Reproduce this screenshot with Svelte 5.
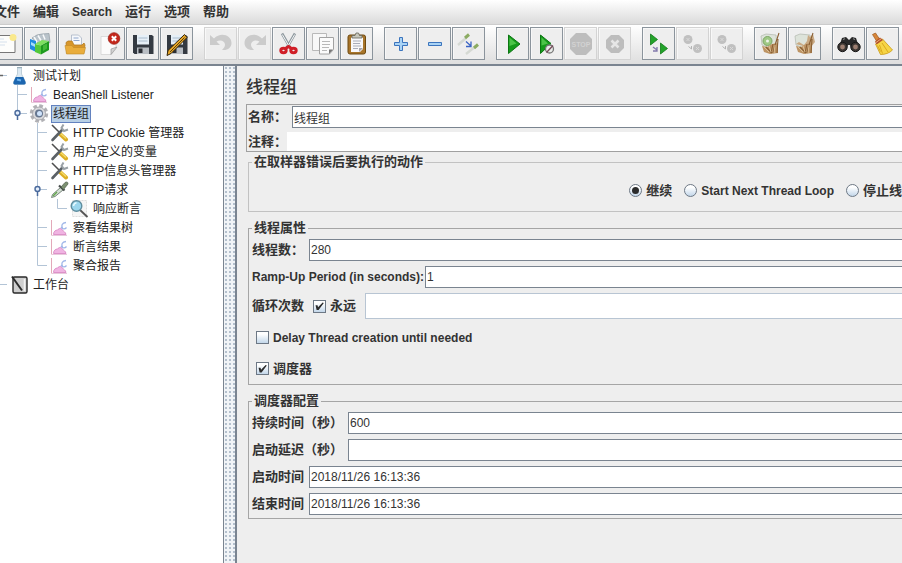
<script>
  const menus = [
    { text: '文件' },
    { text: '编辑' },
    { text: 'Search', latin: true },
    { text: '运行' },
    { text: '选项' },
    { text: '帮助' }
  ];

  const toolGroups = [
    ['new', 'templates', 'open', 'close', 'save', 'saveas'],
    ['undo', 'redo', 'cut', 'copy', 'paste'],
    ['expand', 'collapse', 'toggle'],
    ['start', 'startnow', 'stop', 'shutdown'],
    ['remotestart', 'remotestop', 'remoteshutdown'],
    ['clear', 'clearall'],
    ['find', 'resetfind']
  ];
  const disabled = ['undo', 'redo', 'stop', 'shutdown', 'remotestop', 'remoteshutdown'];

  // Guide cells: t = tee, l = elbow, v = vertical, h = short stub, r = root handle, o = handle on tee, e = handle on elbow
  const tree = [
    { guides: 'r', icon: 'flask', text: '测试计划' },
    { guides: ' t', icon: 'chart', text: 'BeanShell Listener' },
    { guides: ' e', icon: 'gear', text: '线程组', selected: true },
    { guides: '  t', icon: 'tools', text: 'HTTP Cookie 管理器' },
    { guides: '  t', icon: 'tools', text: '用户定义的变量' },
    { guides: '  t', icon: 'tools', text: 'HTTP信息头管理器' },
    { guides: '  o', icon: 'dropper', text: 'HTTP请求' },
    { guides: '  vl', icon: 'lens', text: '响应断言' },
    { guides: '  t', icon: 'chart', text: '察看结果树' },
    { guides: '  t', icon: 'chart', text: '断言结果' },
    { guides: '  l', icon: 'chart', text: '聚合报告' },
    { guides: 'h', icon: 'bench', text: '工作台' }
  ];

  let name = $state('线程组');
  let comment = $state('');
  let action = $state('continue');
  let threads = $state('280');
  let ramp = $state('1');
  let forever = $state(true);
  let loops = $state('');
  let delay = $state(false);
  let scheduler = $state(true);
  let duration = $state('600');
  let startupDelay = $state('');
  let startTime = $state('2018/11/26 16:13:36');
  let endTime = $state('2018/11/26 16:13:36');
</script>

{#snippet floppy()}
  <path d="M7 8h19l1.500 1.500V27H8.500L7 25.500z" fill="#343a42" />
  <path d="M11 8h12v9.500H11z" fill="#e6eff7" />
  <path d="M12.500 11h9M12.500 14h9" stroke="#a9bccd" />
  <path d="M11 20.500h12V27H11z" fill="#b9bec4" />
  <path d="M12.500 21.500h4V26h-4z" fill="#2b2f35" />
{/snippet}

{#snippet toolIcon(kind)}
  <svg class="tool-icon" viewBox="0 0 33 33" aria-hidden="true">
    {#if kind === 'new'}
      <path d="M4 8.500h21v17H4z" fill="#fdfdfb" stroke="#777" />
      <path d="M7 12h7M7 15h10M7 18h8" stroke="#d5e0ec" />
      <circle cx="23" cy="10.500" r="3.500" fill="#fae98c" />
    {:else if kind === 'templates'}
      <path d="M8 11l5-3 5-1 7-.5 1 9-9 3z" fill="#b9c3ca" stroke="#8e9aa2" stroke-width=".7" />
      <path d="M10 10l3 5M14 8.500l3 5M19 7.500l2 5" stroke="#f7f9fa" stroke-width="1.500" />
      <path d="M6 12l6 2v11l-6-3z" fill="#1f8be0" />
      <path d="M7 15l4 2v3l-4-2z" fill="#a5dcfa" />
      <path d="M11 17l6 1.500v9L11 25z" fill="#52c83c" />
      <path d="M17 18.500l8-4.500v9l-8 4.500z" fill="#1e9a1e" />
      <path d="M11 17l7-4 7 1-8 4.500z" fill="#7fe060" />
      <path d="M19 18.500l4-2v5l-4 2.500z" fill="#45b93a" />
    {:else if kind === 'open'}
      <path d="M13.500 8h7l3 3v10h-10z" fill="#f6f8fb" stroke="#a9b4c4" stroke-width=".8" />
      <path d="M15.500 11h5M15.500 13.500h6" stroke="#8ea6cc" />
      <path d="M8 15.500l2-1.500h4l2 4h8l2-2 1 2-1.500 8.500H9z" fill="#d8962a" stroke="#b27a1e" stroke-width=".8" />
      <path d="M7 18.500h7l1.500 2H27.500L26 27H8.500z" fill="#e9ad3c" stroke="#c18a26" stroke-width=".6" />
    {:else if kind === 'close'}
      <path d="M9 9.500h15V22l-5 5.500H9z" fill="#fbfbfb" stroke="#d4d4d4" stroke-width=".8" />
      <path d="M25 20l-6 7.500V22z" fill="#d4d4d4" stroke="#8d8d8d" stroke-width=".6" />
      <circle cx="22" cy="11.500" r="5.800" fill="#c4281c" stroke="#98190f" stroke-width=".7" />
      <path d="M19.800 9.300l4.400 4.400M24.200 9.300l-4.400 4.400" stroke="#fff" stroke-width="2" />
    {:else if kind === 'save'}
      {@render floppy()}
    {:else if kind === 'saveas'}
      {@render floppy()}
      <path d="M24.500 7.500l2.500 3L11 26.500l-4 2 1-5z" fill="#e8a727" stroke="#33240a" stroke-width="1" />
      <path d="M24.500 10.500L10 25" stroke="#57400f" stroke-width="1" />
    {:else if kind === 'undo'}
      <path d="M6 8v10h10l-3.500-3.500c4-2.500 8.500-.5 8.500 3 0 2-1 3.500-3 5.500 6 .5 9.500-2.500 9.500-7 0-8-11-11.500-17.500-4.500z" fill="#cbcbcb" />
    {:else if kind === 'redo'}
      <path d="M28 8v10H18l3.500-3.500c-4-2.500-8.500-.5-8.500 3 0 2 1 3.500 3 5.500-6 .5-9.500-2.500-9.500-7 0-8 11-11.500 17.500-4.500z" fill="#cbcbcb" />
    {:else if kind === 'cut'}
      <path d="M10 6.500l8 14M23 6.500l-8 14" stroke="#8d979d" stroke-width="2.600" />
      <path d="M10.300 7.500l7.500 13M22.700 7.500l-7.500 13" stroke="#f4f6f7" stroke-width="1" />
      <g fill="none" stroke="#d01f28" stroke-width="3">
        <ellipse cx="11.500" cy="23.500" rx="2.700" ry="2.200" />
        <ellipse cx="21.500" cy="23.500" rx="2.700" ry="2.200" />
        <path d="M13.500 21.500l3-2 3 2" />
      </g>
    {:else if kind === 'copy'}
      <path d="M6.500 6.500h14v17h-14z" fill="#f8f8f8" stroke="#b9b9b9" />
      <path d="M13.500 10.500h14v12l-4 4.500h-10z" fill="#fbfbfb" stroke="#a2a2a2" />
      <path d="M27 22.500h-4V27z" fill="#777" />
      <path d="M16 14.500h8M16 17.500h8M16 20.500h7M16 23.500h5" stroke="#b8b8b8" />
    {:else if kind === 'paste'}
      <rect x="8" y="8" width="17.500" height="19" rx="2" fill="#a8752a" stroke="#6e4a10" />
      <path d="M11 10.500h12V22l-3 3h-9z" fill="#f8f8fa" />
      <path d="M13 14h8M13 16.500h7M13 19h8M13 21.500h5" stroke="#a9adba" />
      <path d="M23 21h-4v4z" fill="#a6a6ad" />
      <path d="M12 11V8.500h3l1-2.500h2.500l1 2.500H22V11z" fill="#c7c7bb" stroke="#66665c" stroke-width=".8" />
    {:else if kind === 'expand'}
      <path d="M15.500 10.500h3v5h5v3h-5v5h-3v-5h-5v-3h5z" fill="#a9d3f5" stroke="#3b74bd" />
    {:else if kind === 'collapse'}
      <path d="M10.500 15.500h13v3h-13z" fill="#a9d3f5" stroke="#3b74bd" />
    {:else if kind === 'toggle'}
      <path d="M6 18l8-7M14 27l10-8" stroke="#d5d9d3" stroke-width="2.400" />
      <path d="M13 11l4-3.500M22 21l4-3.500" stroke="#8bab62" stroke-width="3" />
      <path d="M14 14.500l5 4.500M19 14.500v5h-5" fill="none" stroke="#3b64c4" stroke-width="1.300" />
    {:else if kind === 'start'}
      <path d="M12.500 8L24 17 12.500 26.500z" fill="#159a1b" stroke="#0c7612" />
      <path d="M13.500 10.500l7 6-7 2.500z" fill="#4cc448" />
    {:else if kind === 'startnow'}
      <path d="M10.500 8L21 16.500l-10.500 10z" fill="#159a1b" stroke="#0c7612" />
      <path d="M11.500 10.500l6.500 6-6.500 2z" fill="#4cc448" />
      <circle cx="19.500" cy="22" r="4" fill="#e9ece9" stroke="#777" stroke-width="1.300" />
      <path d="M16.500 25.500l6.500-7" stroke="#774a5a" stroke-width="1.300" />
    {:else if kind === 'stop'}
      <path d="M12 6h10l6 6v10l-6 6H12l-6-6V12z" fill="#bdbdbd" />
      <text x="17" y="20" text-anchor="middle" class="stop-text">STOP</text>
    {:else if kind === 'shutdown'}
      <path d="M13 8h8l5 5v8l-5 5h-8l-5-5v-8z" fill="#bdbdbd" />
      <path d="M13.500 13.500l7 7M20.500 13.500l-7 7" stroke="#e6e6e6" stroke-width="2.500" />
    {:else if kind === 'remotestart'}
      <path d="M8.500 7l7 5.500-7 5.500z" fill="#23a32a" stroke="#127a18" stroke-width=".8" />
      <path d="M18.500 16l7 5.500-7 5.500z" fill="#23a32a" stroke="#127a18" stroke-width=".8" />
      <path d="M11 20l4 3M15 20v4h-4" fill="none" stroke="#8279ad" stroke-width="1.300" />
    {:else if kind === 'remotestop' || kind === 'remoteshutdown'}
      <circle cx="12" cy="12.500" r="4.500" fill="#c0c0c0" />
      <circle cx="21.500" cy="21.500" r="4.500" fill="#c0c0c0" />
      <path d="M10.500 11l3 3M13.500 11l-3 3M20 20l3 3M23 20l-3 3" stroke="#d9d9d9" />
      <path d="M12.500 19.500l3 2.500v-3" fill="none" stroke="#b3b3b3" />
    {:else if kind === 'clear' || kind === 'clearall'}
      <path d="M7 9l5-2 10 1 1 11-8 2-7-3z" fill="#dde3da" stroke="#b2b8ae" stroke-width=".7" />
      {#if kind === 'clear'}
        <circle cx="13.500" cy="14" r="4.500" fill="#9fc985" stroke="#7da766" />
        <circle cx="13.500" cy="14" r="1.500" fill="#eef4ea" />
      {:else}
        <path d="M8 17l3-2 5 3 3-4 1-6 2 2 3-3 2 8-5 6z" fill="#c9a983" />
      {/if}
      <path d="M8 19l5 1 5-3 6-1v10l-8 1-6-2z" fill="#bd9464" />
      <path d="M25 6l-4 12-2 8M24 12l-1 14M19 17l-2 9M12 20l6 6" fill="none" stroke="#8a6034" stroke-width="1.100" />
      <path d="M21 18l-1 8M15 19l2 6M10 20l5 5" stroke="#e0c59b" stroke-width=".9" />
    {:else if kind === 'find'}
      <path d="M10 11l4-1 3 3 3-3 4 1 3 9-7 3-2-5h-2l-2 5-7-3z" fill="#292929" />
      <circle cx="10.500" cy="20" r="4.700" fill="#3b3632" stroke="#161616" />
      <circle cx="23.500" cy="20" r="4.700" fill="#3b3632" stroke="#161616" />
      <circle cx="10.500" cy="20" r="2.400" fill="#9c7e70" />
      <circle cx="23.500" cy="20" r="2.400" fill="#9c7e70" />
      <path d="M11 12.500l2-.8M21 11.700l2 .8" stroke="#8f8f8f" />
    {:else if kind === 'resetfind'}
      <path d="M6.500 7.500l3-1.500 4 6-3 2z" fill="#d7863b" stroke="#9d5a1d" stroke-width=".7" />
      <path d="M9.500 17l7-5 10 11c-3 3-7 4.500-12 4.500z" fill="#f6d545" stroke="#c99a17" stroke-width=".8" />
      <path d="M13.500 18l3 8.500M16 16l6 9M11.500 18.500l3 6" stroke="#dba91c" />
      <path d="M9 14.500l5-4 3 2.500-6.500 4.500z" fill="#b5532b" />
      <path d="M10 15.500l5.500-4" stroke="#e8b07c" />
    {/if}
  </svg>
{/snippet}

{#snippet guide(kind)}
  <svg class="guide" viewBox="0 0 20 19" aria-hidden="true">
    {#if 'tvo'.includes(kind)}<path d="M9.500 0v19" class="line" />{/if}
    {#if 'le'.includes(kind)}<path d="M9.500 0v9.500" class="line" />{/if}
    {#if 'tloe'.includes(kind)}<path d="M9.500 9.500H19" class="line" />{/if}
    {#if 'hr'.includes(kind)}<path d="M11 9.500h8" class="line" />{/if}
    {#if kind === 'r'}<path d="M10 9.500h5" stroke="#666" stroke-width="1.500" />{/if}
    {#if 'oe'.includes(kind)}
      <path d="M9.500 11v5" stroke="#4a6a9c" stroke-width="1.500" />
      <circle cx="9.500" cy="9" r="2.500" fill="#e4eefb" stroke="#4a6a9c" stroke-width="1.400" />
    {/if}
  </svg>
{/snippet}

{#snippet nodeIcon(kind)}
  <svg class="node-icon" viewBox="0 0 22 19" aria-hidden="true">
    {#if kind === 'flask'}
      <path d="M9.500 2v6L5.500 16q-.5 2.500 1.500 2.500h9q2 0 1.500-2.500L13.500 8V2z" fill="#dce9f2" stroke="#b3c5d1" stroke-width=".8" />
      <path d="M7.700 11h7.600l2.200 5q.5 2.500-1.500 2.500H7q-2 0-1.500-2.500z" fill="#1c66b0" />
      <path d="M9 13.500l4 1" stroke="#6fb4ee" stroke-width="2" />
      <path d="M9 1.500h5" stroke="#98adb9" />
    {:else if kind === 'chart'}
      <path d="M3.500 2v15.500" stroke="#e3a9b9" />
      <path d="M4 17.500h15" stroke="#e8c9dc" />
      <path d="M5.500 16.500c0-3 2-4.500 4-4.500 1.500-2 4-2 5 0s3 1.500 3.500 4.500z" fill="#f0b4e2" stroke="#d98ac4" stroke-width=".9" />
      <path d="M18 4.500c-4 .5-5 3-3.500 5.500M13 9c1.500 2.500 4 2.500 5.500.5" fill="none" stroke="#9fb6e8" stroke-width="1.300" />
    {:else if kind === 'gear'}
      <circle cx="11" cy="9.500" r="7.800" fill="none" stroke="#b1b1b5" stroke-width="2.800" stroke-dasharray="3.700 2.426" />
      <circle cx="11" cy="9.500" r="6.500" fill="#d9d9dc" stroke="#9a9aa0" stroke-width=".8" />
      <circle cx="11" cy="9.500" r="4" fill="#66768f" />
      <circle cx="11.500" cy="9.500" r="2.500" fill="#cfe3fb" />
    {:else if kind === 'tools'}
      <path d="M4 2l8 8" stroke="#4e4e4e" stroke-width="1.600" />
      <path d="M12 11l6 5.500" stroke="#dcae25" stroke-width="4" stroke-linecap="round" />
      <path d="M12.500 10.500l5.500 5" stroke="#f6dc69" stroke-width="1.300" />
      <path d="M4.500 17L14 7" stroke="#5b6166" stroke-width="2.600" stroke-linecap="round" />
      <path d="M15.500 1.500l-2 3.500 2.500 3 4-1.500" fill="none" stroke="#9aa1a6" stroke-width="2" />
    {:else if kind === 'dropper'}
      <path d="M3.500 17.500l1-3 8-7 2.500 2.500-8 6.500z" fill="#d4dfd3" stroke="#6d7b72" stroke-width=".9" />
      <path d="M5 16l4-4" stroke="#64a74e" stroke-width="1.500" />
      <path d="M11 5.500l5.500 5" stroke="#454b4a" stroke-width="2.200" />
      <path d="M13 7l4-4.500q3-1.500 3 1.500l-4.500 5.500z" fill="#7c9070" stroke="#4c5c4a" stroke-width=".7" />
    {:else if kind === 'lens'}
      <path d="M4.500 1.500h14v16h-14z" fill="#f5f5f5" stroke="#dddddd" stroke-dasharray="2 1" />
      <path d="M12 11l7.500 7" stroke="#555" stroke-width="1.800" />
      <circle cx="8.500" cy="7" r="5.300" fill="#9bd6ed" stroke="#5f8d9e" stroke-width="1.400" />
      <path d="M5.500 7q.5-3 3-3.300" fill="none" stroke="#e8faff" stroke-width="1.500" />
    {:else if kind === 'bench'}
      <rect x="5" y="2" width="14" height="16" rx="1.500" fill="#cfcfcf" stroke="#2a2a2a" stroke-width="1.400" />
      <path d="M16.500 4v12" stroke="#f3f3f3" stroke-width="1.500" />
      <path d="M4 1.500L14 15.500" stroke="#2c2c2c" stroke-width="2" />
    {/if}
  </svg>
{/snippet}

<div class="app">
  <header>
    <nav class="menubar">
      {#each menus as menu}
        <button type="button" class="menu" class:latin={menu.latin}>{menu.text}</button>
      {/each}
    </nav>
    <div class="toolbar" role="toolbar" aria-label="JMeter">
      {#each toolGroups as group}
        <div class="tool-group">
          {#each group as tool}
            <button type="button" class="tool" aria-label={tool} disabled={disabled.includes(tool)}>
              {@render toolIcon(tool)}
            </button>
          {/each}
        </div>
      {/each}
    </div>
  </header>

  <div class="body">
    <aside>
      <ul class="tree">
        {#each tree as node}
          <li>
            {#each node.guides.split('') as cell}{@render guide(cell)}{/each}
            {@render nodeIcon(node.icon)}
            <span class="node-label" class:selected={node.selected}>{node.text}</span>
          </li>
        {/each}
      </ul>
    </aside>
    <div class="divider"></div>

    <main>
      <h1>线程组</h1>

      <section class="identity">
        <div class="row">
          <label for="name" class="w-name">名称：</label>
          <input id="name" type="text" bind:value={name} />
        </div>
        <div class="row comment">
          <label for="comment">注释：</label>
          <input id="comment" type="text" bind:value={comment} />
        </div>
      </section>

      <fieldset>
        <legend>在取样器错误后要执行的动作</legend>
        <div class="actions">
          <label><input type="radio" name="action" value="continue" bind:group={action} />继续</label>
          <label class="latin"><input type="radio" name="action" value="next" bind:group={action} />Start Next Thread Loop</label>
          <label><input type="radio" name="action" value="stop" bind:group={action} />停止线程</label>
        </div>
      </fieldset>

      <fieldset class="strong">
        <legend>线程属性</legend>
        <div class="rows">
          <div class="row">
            <label for="threads" class="w-short">线程数：</label>
            <input id="threads" type="text" bind:value={threads} />
          </div>
          <div class="row">
            <label for="ramp" class="latin w-ramp">Ramp-Up Period (in seconds):</label>
            <input id="ramp" type="text" bind:value={ramp} />
          </div>
          <div class="row loop">
            <label for="loops" class="w-loop">循环次数</label>
            <label class="forever"><input type="checkbox" bind:checked={forever} />永远</label>
            <input id="loops" type="text" disabled={forever} bind:value={loops} />
          </div>
        </div>
        <label class="check latin"><input type="checkbox" bind:checked={delay} />Delay Thread creation until needed</label>
        <label class="check"><input type="checkbox" bind:checked={scheduler} />调度器</label>
      </fieldset>

      <fieldset class="strong">
        <legend>调度器配置</legend>
        <div class="rows">
          <div class="row">
            <label for="duration" class="w-long">持续时间（秒）</label>
            <input id="duration" type="text" bind:value={duration} />
          </div>
          <div class="row">
            <label for="startup" class="w-long">启动延迟（秒）</label>
            <input id="startup" type="text" bind:value={startupDelay} />
          </div>
          <div class="row">
            <label for="start" class="w-short">启动时间</label>
            <input id="start" type="text" bind:value={startTime} />
          </div>
          <div class="row">
            <label for="end" class="w-short">结束时间</label>
            <input id="end" type="text" bind:value={endTime} />
          </div>
        </div>
      </fieldset>
    </main>
  </div>
</div>

<style>
  :global(body) {
    margin: 0;
    overflow: hidden;
  }
  .app {
    display: flex;
    flex-direction: column;
    height: 100vh;
    overflow: hidden;
    background: #eeeeee;
    color: #333;
    font: bold 13px/16px 'Liberation Sans', 'Noto Sans CJK SC', sans-serif;
    white-space: nowrap;
  }
  button,
  input {
    box-sizing: border-box;
    margin: 0;
    font: inherit;
    color: inherit;
  }
  .latin {
    font-size: 12px;
  }
  header {
    flex: none;
    border-bottom: 2px solid #7a8490;
  }
  .menubar {
    display: flex;
    gap: 13px;
    height: 25px;
    margin-left: -6px;
    background: linear-gradient(#ffffff, #dadada);
    border-bottom: 1px solid #cccccc;
    box-sizing: border-box;
  }
  .menu {
    padding: 0;
    border: 0;
    background: none;
  }
  .toolbar {
    display: flex;
    gap: 11px;
    padding: 2px 0 4px;
    background: linear-gradient(#ffffff, #dedede);
    margin-left: -10px;
  }
  .tool-group {
    display: flex;
    flex: none;
    gap: 1px;
  }
  .tool {
    display: block;
    width: 33px;
    height: 33px;
    padding: 0;
    border: 1px solid #8b949c;
    background: #eeeeee;
    box-shadow: inset 1px 1px #f8f8f8;
  }
  .tool:disabled {
    border-color: #d3d3d3;
  }
  .tool-icon {
    display: block;
    width: 33px;
    height: 33px;
    margin: -1px;
    fill: none;
  }
  .stop-text {
    font: bold 7px 'Liberation Sans', sans-serif;
    fill: #d2d2d2;
  }

  .body {
    display: flex;
    flex: 1;
    min-height: 0;
  }
  aside {
    flex: none;
    width: 223px;
    overflow: hidden;
    background: #fff;
    border-right: 1px solid #7a8490;
  }
  .tree {
    margin: 0 0 0 -12px;
    padding: 0;
    list-style: none;
    font-weight: normal;
    font-size: 12px;
  }
  .tree li {
    display: flex;
    align-items: center;
    height: 19px;
  }
  .guide {
    flex: none;
    width: 20px;
    height: 19px;
  }
  .line {
    fill: none;
    stroke: #b3c4d6;
  }
  .node-icon {
    flex: none;
    width: 22px;
    height: 19px;
    fill: none;
  }
  .node-label {
    padding: 0 1px;
    border: 1px solid transparent;
    margin-left: 1px;
    color: #222;
  }
  .node-label.selected {
    background: #b8cfe5;
    border-color: #6382bf;
  }
  .divider {
    flex: none;
    width: 11px;
    border-right: 2px solid #7a8490;
    background-color: #f1f4f7;
    background-image: radial-gradient(circle, #b4c0cd 0 1px, transparent 1px);
    background-size: 4px 4px;
  }

  main {
    flex: 1;
    min-width: 0;
    padding: 11px 0 0 9px;
    overflow: hidden;
  }
  h1 {
    margin: 0 0 5px;
    font-size: 17px;
    line-height: 22px;
    font-weight: 500;
  }
  .identity {
    border: 1px solid #a0a0a0;
    border-right: 0;
    padding: 1px 0 0 1px;
    margin-bottom: 2px;
  }
  .row {
    display: flex;
    align-items: center;
    height: 22px;
  }
  .row label {
    flex: none;
  }
  .row > input {
    flex: 1;
    min-width: 0;
    height: 22px;
    padding: 0 0 0 1px;
    border: 1px solid #7a8490;
    border-right: 0;
    border-radius: 0;
    background: #fff;
    font-weight: normal;
    font-size: 12px;
  }
  .comment {
    height: 19px;
    margin-top: 4px;
  }
  .comment > input {
    height: 19px;
    border: 0;
  }
  .w-name {
    width: 44px;
  }
  .w-short {
    width: 57px;
  }
  .w-long {
    width: 96px;
  }
  .w-ramp {
    min-width: 173px;
  }
  .w-loop {
    width: 61px;
  }
  fieldset {
    min-width: 0;
    margin: 0 0 8px 2px;
    padding: 0;
    border: 1px solid #c2c2c2;
    border-right: 0;
  }
  fieldset.strong {
    border-color: #a5a5a5;
  }
  legend {
    margin-left: 3px;
    padding: 0 2px;
    line-height: 16px;
  }
  .actions {
    display: flex;
    justify-content: flex-end;
    align-items: center;
    gap: 12px;
    height: 41px;
    margin-right: -13px;
  }
  .actions label,
  .forever,
  .check {
    display: flex;
    align-items: center;
    gap: 4px;
  }
  .rows {
    display: flex;
    flex-direction: column;
    gap: 5px;
    padding: 3px 0 3px 3px;
  }
  .loop,
  .loop > input {
    height: 26px;
  }
  .loop > input {
    border-color: #b8c5d3;
  }
  .forever {
    width: 52px;
  }
  .check {
    height: 31px;
    margin-left: 7px;
  }
  [type='radio'],
  [type='checkbox'] {
    appearance: none;
    display: grid;
    place-items: center;
    flex: none;
    width: 13px;
    height: 13px;
    border: 1px solid #6d7885;
    background: linear-gradient(#ffffff 20%, #c3d7ea);
  }
  [type='radio'] {
    border-radius: 50%;
  }
  [type='radio']:checked::after {
    content: '';
    width: 7px;
    height: 7px;
    border-radius: 50%;
    background: #2b2b2b;
  }
  [type='checkbox']:checked::after {
    content: '';
    width: 9px;
    height: 8px;
    background: #2b2b2b;
    clip-path: polygon(6% 40%, 28% 40%, 34% 65%, 85% 5%, 98% 12%, 40% 100%, 18% 100%);
  }
</style>
